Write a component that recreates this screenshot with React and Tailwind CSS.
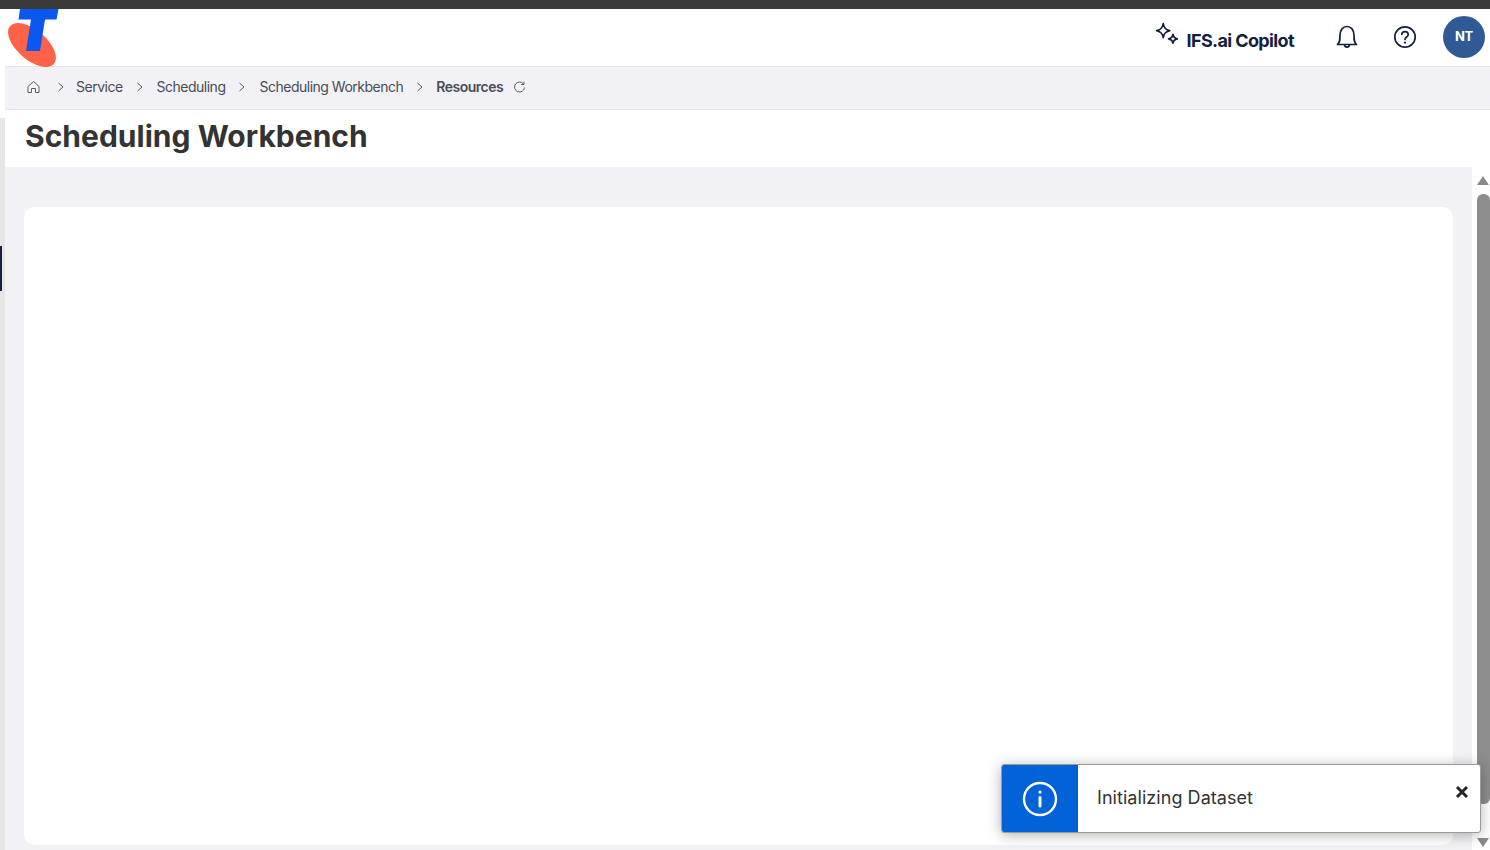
import React from "react";

const Chevron = () => (
  <svg width="8" height="10" viewBox="0 0 8 10" fill="none" stroke="#5a5d66" strokeWidth="1" className="block shrink-0">
    <path d="M1.5 1 L6 5 L1.5 9" />
  </svg>
);

const Logo = () => (
  <svg width="52" height="58" viewBox="0 0 52 58" className="block">
    <ellipse cx="24" cy="36" rx="29" ry="14.8" transform="rotate(41 24 36)" fill="#ff6347" />
    <path d="M12 0 H50.5 L48.5 10.5 H37 L32 42 H18 L23 10.5 H10.5 Z" fill="#0b57f0" />
  </svg>
);

export default function App() {
  return (
    <div className="relative h-[850px] w-[1490px] overflow-hidden bg-white font-['Inter',sans-serif]">
      <div className="h-[9px] bg-[#3a3a3a]" />
      <div className="flex h-[841px]">
        <div className="flex w-[5px] shrink-0 flex-col">
          <div className="h-[109px] bg-white" />
          <div className="h-[128px] bg-[#e6e6e6]" />
          <div className="h-[45px] bg-[#e6e6e6]">
            <div className="h-full w-[2px] bg-[#14203f]" />
          </div>
          <div className="flex-1 bg-[#e6e6e6]" />
        </div>

        <div className="flex min-w-0 flex-1 flex-col">
          <header className="flex h-[58px] shrink-0 items-center justify-between rounded-tr-[14px] border-b border-[#e4e4e9] bg-white pb-[2px] pr-[5px]">
            <div className="ml-[3px] self-start">
              <Logo />
            </div>
            <div className="flex items-center">
              <svg width="26" height="26" viewBox="0 0 24 24" fill="none" stroke="#14203f" strokeWidth="1.6" strokeLinejoin="round" className="mb-[3px]">
                <path d="M8.5 1.5 C9.2 5.5 10.5 7 14.5 8 C10.5 9 9.2 10.5 8.5 14.5 C7.8 10.5 6.5 9 2.5 8 C6.5 7 7.8 5.5 8.5 1.5 Z" />
                <path d="M17.5 11.5 C17.9 14 18.8 15 21.5 15.5 C18.8 16 17.9 17 17.5 19.5 C17.1 17 16.2 16 13.5 15.5 C16.2 15 17.1 14 17.5 11.5 Z" />
              </svg>
              <span className="ml-[7px] mt-[8px] text-[18px] font-bold leading-[24px] tracking-[-0.62px] text-[#14203f]">IFS.ai Copilot</span>
              <svg width="24" height="26" viewBox="0 0 24 26" fill="none" stroke="#14203f" strokeWidth="1.7" strokeLinejoin="round" className="ml-[41px]">
                <path d="M2.5 20.5 C5 18.5 5 16 5 11 C5 6 8 2.5 12 2.5 C16 2.5 19 6 19 11 C19 16 19 18.5 21.5 20.5 Z" />
                <path d="M9.5 20.5 C9.5 24 14.5 24 14.5 20.5" />
              </svg>
              <svg width="24" height="24" viewBox="0 0 24 24" fill="none" stroke="#14203f" strokeWidth="1.7" strokeLinecap="round" className="ml-[34px]">
                <circle cx="12" cy="12" r="10.2" />
                <path d="M8.8 9.3 C9 5.6 15.2 5.6 15.2 9.5 C15.2 12 12 12 12 14.4" />
                <path d="M12 17.6 V17.7" strokeWidth="2" />
              </svg>
              <div className="ml-[26px] flex h-[42px] w-[42px] items-center justify-center rounded-full bg-[#2f5a94] text-[13px] font-bold tracking-[-0.3px] text-white">
                NT
              </div>
            </div>
          </header>

          <nav className="flex h-[43px] shrink-0 items-center border-b border-[#e4e4e9] bg-[#f1f1f6] pb-[3px] pl-[22px] text-[14px] tracking-[-0.5px] text-[#494c55]">
            <svg width="13" height="14" viewBox="0 0 13 14" fill="none" stroke="#5a5d66" strokeWidth="1">
              <path d="M1 6.5 L6.5 1.5 L12 6.5 V12.5 H8.5 V8.5 H4.5 V12.5 H1 Z" strokeLinejoin="round" />
            </svg>
            <span className="ml-[17px]"><Chevron /></span>
            <span className="ml-[11px]">Service</span>
            <span className="ml-[13px]"><Chevron /></span>
            <span className="ml-[13px]">Scheduling</span>
            <span className="ml-[13px]"><Chevron /></span>
            <span className="ml-[13px]">Scheduling Workbench</span>
            <span className="ml-[13px]"><Chevron /></span>
            <span className="ml-[12px] font-semibold">Resources</span>
            <svg width="13" height="13" viewBox="0 0 13 13" fill="none" stroke="#5a5d66" strokeWidth="1" className="ml-[10px] mt-[1px]">
              <path d="M10.5 3 A5 5 0 1 0 11.5 6.5" />
              <path d="M11 0.8 V3.5 H8.2" />
            </svg>
          </nav>

          <div className="flex h-[57px] shrink-0 items-center bg-white pb-[5px] pl-[20px]">
            <h1 className="text-[30px] font-bold leading-none tracking-[0.02px] text-[#333333]">Scheduling Workbench</h1>
          </div>

          <div className="flex min-h-0 flex-1">
            <main className="w-[1467px] bg-[#f1f1f6] pb-[5px] pl-[19px] pr-[19px] pt-[40px]">
              <div className="h-full rounded-[10px] bg-white" />
            </main>
            <div className="flex w-[18px] flex-col items-center bg-white pl-[4px] pt-[9px]">
              <div className="h-0 w-0 border-x-[6.5px] border-b-[9px] border-x-transparent border-b-[#8a8a8a]" />
              <div className="mt-[9px] h-[610px] w-[13px] rounded-[6px] bg-[#8d8d8d]" />
              <div className="flex-1" />
              <div className="mb-[3px] h-0 w-0 border-x-[6.5px] border-t-[9px] border-x-transparent border-t-[#8a8a8a]" />
            </div>
          </div>
        </div>
      </div>

      <div className="absolute left-[1001px] top-[764px] flex h-[69px] w-[480px] overflow-hidden rounded-[3px] border border-[#9a9a9a] bg-white shadow-[0_2px_14px_rgba(0,0,0,0.3)]">
        <div className="flex w-[76px] shrink-0 items-center justify-center bg-[#0263d8]">
          <svg width="36" height="36" viewBox="0 0 36 36" fill="none" stroke="white" strokeLinecap="round">
            <circle cx="18" cy="18" r="16" strokeWidth="2.4" />
            <path d="M18 16.5 V25" strokeWidth="3" />
            <path d="M18 11 V11.1" strokeWidth="3.2" />
          </svg>
        </div>
        <div className="flex flex-1 items-center pb-[2px] pl-[19px] text-[18px] tracking-[0.05px] text-[#333333]">Initializing Dataset</div>
        <svg width="14" height="14" viewBox="0 0 14 14" stroke="#262626" strokeWidth="3" className="absolute right-[11px] top-[20px]">
          <path d="M2 2 L12 12 M12 2 L2 12" />
        </svg>
      </div>
    </div>
  );
}
